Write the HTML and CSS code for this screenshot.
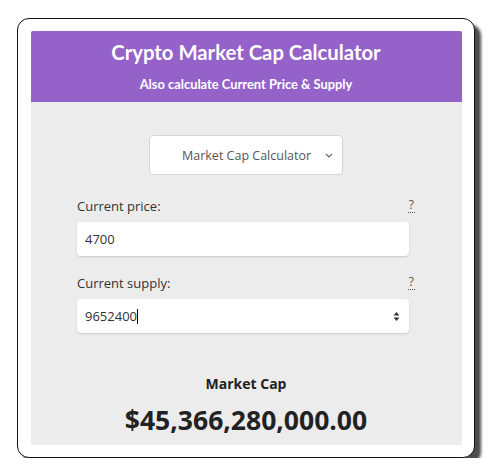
FILE: index.html
```html
<!DOCTYPE html>
<html>
<head>
<meta charset="utf-8">
<link rel="stylesheet" href="styles.css">
</head>
<body>
<div class="card">
  <div class="calc">
    <header class="head">
      <h1 class="title">Crypto Market Cap Calculator</h1>
      <p class="subtitle">Also calculate Current Price &amp; Supply</p>
    </header>
    <main class="body">
      <div class="select">
        <span class="select-text">Market Cap Calculator</span>
        <svg class="chev" width="8" height="5" viewBox="0 0 8 5"><path d="M1 1l3 3 3-3" fill="none" stroke="#666" stroke-width="1.1"/></svg>
      </div>
      <div class="form">
        <div class="field">
          <div class="label-row"><span class="label">Current price:</span><span class="help">?</span></div>
          <div class="input"><span>4700</span></div>
        </div>
        <div class="field">
          <div class="label-row"><span class="label">Current supply:</span><span class="help">?</span></div>
          <div class="input"><span>9652400<span class="caret"></span></span>
            <svg class="spin" width="7" height="11" viewBox="0 0 7 11"><path d="M3.5 1L6.5 4.5H0.5z" fill="#333"/><path d="M3.5 10L6.5 6.5H0.5z" fill="#333"/></svg>
          </div>
        </div>
      </div>
      <div class="result">
        <div class="result-label">Market Cap</div>
        <div class="result-value">$45,366,280,000.00</div>
      </div>
    </main>
  </div>
</div>
</body>
</html>
```
FILE: styles.css
```css
* { box-sizing: border-box; }
html, body { margin: 0; padding: 0; background: #fff; }
body {
  font-family: "Open Sans", "Noto Sans", sans-serif;
  padding: 18px 0 0 17px;
}
.card {
  width: 458px;
  height: 440px;
  border: 1.5px solid #111;
  border-radius: 12px;
  background: #fff;
  padding: 12px 11px 0 12.5px;
  box-shadow: 6px 6px 3px rgba(0,0,0,0.7);
  overflow: hidden;
}
.calc { width: 431px; }
.head {
  background: #9562ca;
  height: 71px;
  color: #fff;
  text-align: center;
  padding-top: 8px;
  border-radius: 2px 2px 0 0;
}
.title {
  margin: 0;
  font-family: "Lato", sans-serif;
  font-weight: 700;
  font-size: 20.3px;
  line-height: 26px;
}
.subtitle {
  margin: 11px 0 0;
  font-family: "Lato", sans-serif;
  font-weight: 700;
  font-size: 12.9px;
  line-height: 16px;
}
.body {
  background: #ececec;
  height: 343px;
  padding-top: 33px;
  display: flex;
  flex-direction: column;
  align-items: center;
}
.select {
  width: 194px;
  height: 40px;
  background: #fff;
  border: 1px solid #d6d6d6;
  border-radius: 4px;
  display: flex;
  align-items: center;
  padding-left: 32px;
  color: #555;
  font-size: 12.5px;
}
.select-text { flex: 1; }
.chev { margin-right: 9px; }
.form { width: 338px; margin-top: 22px; }
.field { margin-bottom: 18px; }
.label-row {
  display: flex;
  justify-content: space-between;
  align-items: flex-start;
  color: #333;
  font-size: 13px;
  height: 25px;
}
.label { line-height: 18px; }
.help {
  font-size: 12px;
  line-height: 15px;
  color: #555;
  border-bottom: 1px dotted #555;
  margin-top: 0;
  padding: 0 1px;
}
.input {
  width: 332px;
  height: 34px;
  background: #fff;
  border-radius: 4px;
  box-shadow: 0 1px 2px rgba(0,0,0,0.15);
  display: flex;
  align-items: center;
  justify-content: space-between;
  padding: 0 8px;
  font-size: 13px;
  color: #333;
}
.caret {
  display: inline-block;
  width: 1px;
  height: 15px;
  background: #000;
  vertical-align: -3px;
}
.spin { margin-right: 1px; }
.result {
  text-align: center;
  margin-top: 24px;
  color: #222;
}
.result-label {
  font-weight: 700;
  font-size: 14px;
  line-height: 18px;
}
.result-value {
  font-weight: 700;
  font-size: 26.5px;
  line-height: 34px;
  margin-top: 10px;
}
```
